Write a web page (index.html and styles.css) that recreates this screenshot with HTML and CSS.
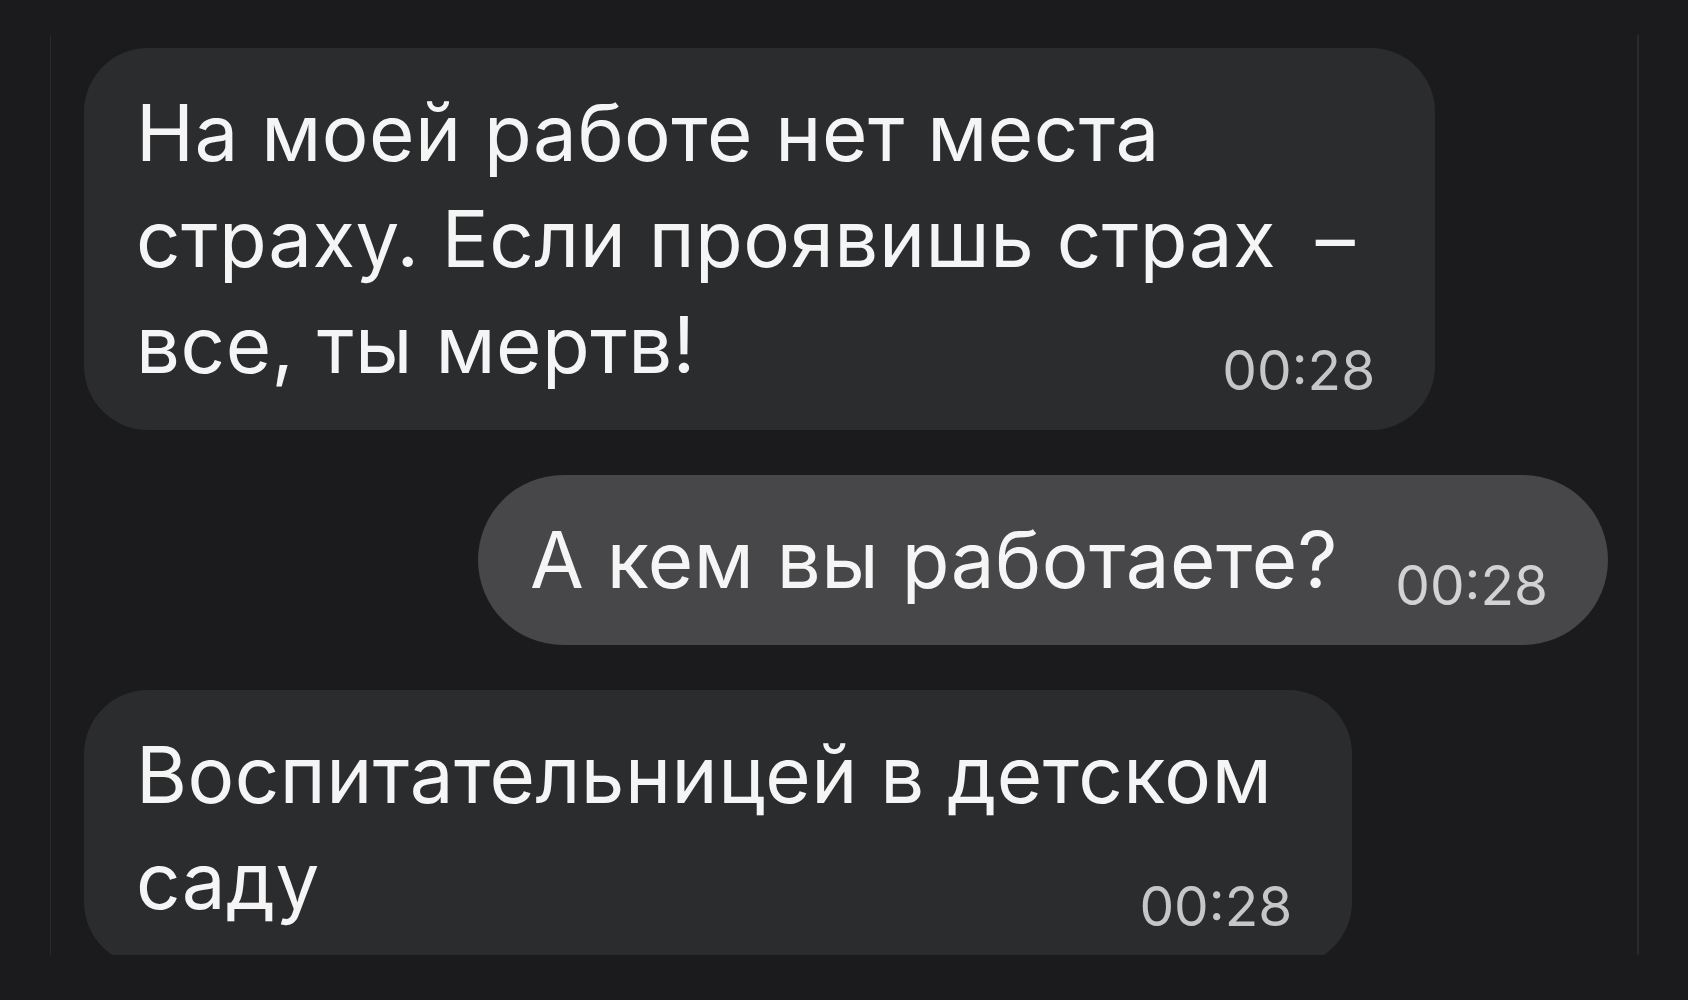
FILE: index.html
```html
<!DOCTYPE html>
<html lang="ru">
<head>
  <meta charset="UTF-8">
  <title>Чат</title>
  <link rel="stylesheet" href="styles.css">
</head>
<body>

<div class="screen">
  <div class="bubble in">
    <p class="text">На моей работе нет места<br>страху. Если проявишь страх&ensp;–<br>все, ты мертв!</p>
    <span class="time">00:28</span>
  </div>

  <div class="bubble out">
    <p class="text">А кем вы работаете?</p>
    <span class="time">00:28</span>
  </div>

  <div class="bubble in">
    <p class="text">Воспитательницей в детском<br>саду</p>
    <span class="time">00:28</span>
  </div>
</div>

</body>
</html>
```

FILE: styles.css
```css
body {
  margin: 0;
  background: #1b1b1d;
  font-family: Inter, "Liberation Sans", Arial, sans-serif;
  color: #f5f5f5;
}
.screen {
  margin: 35px 49px 0 50px;
  height: 920px;
  box-sizing: border-box;
  border-left: 1px solid #2a2a2c;
  border-right: 2px solid #2a2a2c;
  padding: 13px 29px 0 33px;
  display: flex;
  flex-direction: column;
  gap: 45px;
}
.bubble {
  display: grid;
  width: fit-content;
  padding: 32px 60px 32px 52px;
  border-radius: 64px;
  background: #2b2c2e;
}
.bubble.out {
  align-self: flex-end;
  background: #474749;
  border-radius: 85px;
}
.bubble > * {
  grid-area: 1 / 1;
}
.text {
  margin: 0;
  padding-right: 20px;
  font-size: 78px;
  line-height: 106px;
  letter-spacing: 0.5px;
  white-space: nowrap;
}
/* room for the time on the last line */
.text::after {
  content: "";
  display: inline-block;
  width: 190px;
}
.time {
  justify-self: end;
  align-self: end;
  font-size: 55px;
  line-height: 55px;
  color: #c6c6c9;
}
.out .time {
  color: #d2d2d4;
}
```
